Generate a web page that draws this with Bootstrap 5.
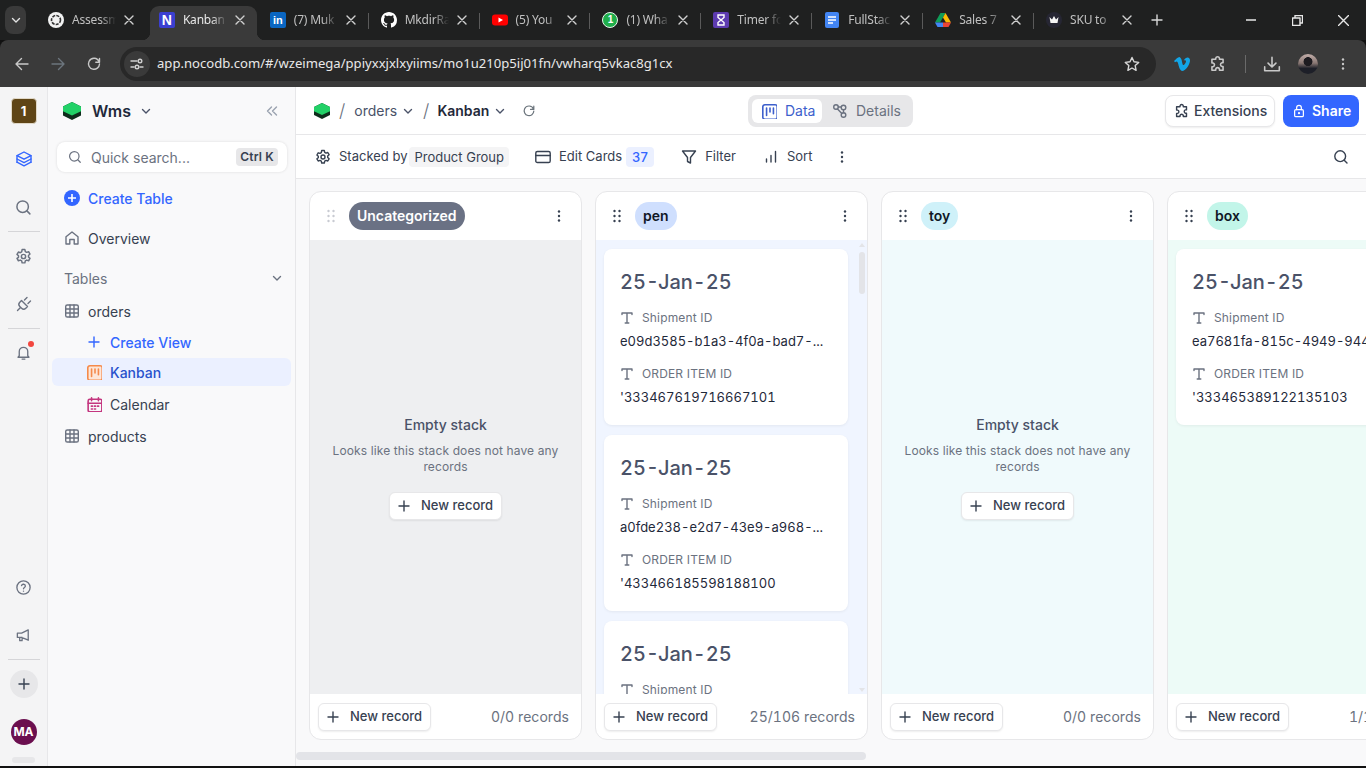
<!DOCTYPE html>
<html lang="en">
<head>
<meta charset="utf-8">
<title>Kanban</title>
<link href="https://cdn.jsdelivr.net/npm/bootstrap@5.3.0/dist/css/bootstrap.min.css" rel="stylesheet">
<style>
html,body{width:1366px;height:768px;overflow:hidden;margin:0;background:#111;font-family:Inter,"Liberation Sans",sans-serif;color:#374151}
svg{display:block;flex:none}
.ic{fill:none;stroke:currentColor;stroke-width:1.4;stroke-linecap:round;stroke-linejoin:round}
.app-root{width:1366px;height:766px}
/* browser chrome */
.tabstrip{height:40px;background:#1f2020;color:#c0c0c0;font-family:"Noto Sans","Open Sans",sans-serif;font-size:12px}
.tab-menu{width:21px;height:28px;margin:6px 10px 0 5px;background:#3a3a3a;border-radius:8px;color:#e3e3e3;flex:none}
.brow-tab{width:110.9px;height:34px;margin-top:6px;padding:0 0 6px 12px;position:relative;flex:none}
.brow-tab.on{background:#3a3a3a;border-radius:9px 9px 0 0;color:#e8e8e8;width:107px;margin:6px .9px 0 3px;padding-left:9px}
.brow-tab.on::before,.brow-tab.on::after{content:"";position:absolute;bottom:0;width:8px;height:8px}
.brow-tab.on::before{left:-8px;background:radial-gradient(circle at 0 0,transparent 8px,#3a3a3a 8.500px)}
.brow-tab.on::after{right:-8px;background:radial-gradient(circle at 100% 0,transparent 8px,#3a3a3a 8.500px)}
.brow-tab.sep::before{content:"";position:absolute;left:-1px;top:7px;height:16px;width:1px;background:#5a5a5a}
.fav{width:16px;height:16px;margin-right:8px;flex:none;font-weight:700;text-align:center;color:#fff}
.fav-n{background:#3b3fd1;border-radius:2px;font-size:14px;line-height:16px;font-family:"Liberation Sans",sans-serif}
.fav-in{background:#0a66c2;border-radius:2px;font-size:11px;line-height:16px;font-family:"Liberation Sans",sans-serif}
.fav-wa{background:#1fae4b;border:1.5px solid #e8f5ec;border-radius:50%;font-size:10px;line-height:13px;font-family:"Liberation Sans",sans-serif}
.tab-name{width:44px;overflow:hidden;white-space:nowrap;-webkit-mask-image:linear-gradient(90deg,#000 65%,transparent 100%);mask-image:linear-gradient(90deg,#000 65%,transparent 100%);letter-spacing:-.2px}
.tab-x{margin-left:auto;margin-right:12px;color:#d0d0d0}
.on .tab-x{margin-right:11px}
.new-tab{margin:6px 0 0 1px;color:#d8d8d8;width:22px;height:28px;flex:none}
.win-btns{margin-left:auto;color:#e8e8e8}
.win-btn{width:46px;height:40px}
.toolbar-row{height:47px;background:#3a3a3a;color:#c9c9c9;border-radius:8px 8px 0 0;padding-left:4px}
.nav-ic{width:36px;flex:none}
.omni{width:1036px;height:34px;margin-left:8px;background:#282828;border-radius:17px;color:#e8e8e8;font-family:"Noto Sans","Open Sans",sans-serif;font-size:13.1px;padding-left:4px;flex:none}
.omni-tune{width:26px;height:26px;border-radius:50%;background:#3a3a3a;margin-right:7px;color:#d0d0d0}
.omni-star{margin-left:auto;margin-right:16px;color:#d8d8d8}
.tb-right{margin-left:17px}
.tb-puz{margin-left:18px}
.tb-sep{width:1px;height:18px;background:#6a6a6a;margin:0 17px 0 18px}
.me-pic{width:20px;height:20px;border-radius:50%;background:radial-gradient(circle at 50% 38%,#1d1b20 0 26%,transparent 30%),linear-gradient(#c2aeaa 0,#8a7874 45%,#1d1f28 72%);margin:0 17px}
/* app */
.main-wrap{height:679px;background:#fff}
.rail{width:48px;flex:none;background:#f4f4f5;border-right:1px solid #e7e7e9;color:#6b7280;position:relative}
.rail-badge{width:26px;height:26px;margin-top:11px;background:#5f4516;border-radius:4px;border:1px solid #e0d8c8;color:#fff;font-weight:700;font-size:13px;line-height:24px;text-align:center}
.rail-btn{width:32px;height:32px;flex:none}
.rail-blue{color:#36f}
.rail-a{margin-top:19px}.rail-b{margin-top:16px}
.rail-line{width:32px;height:1px;background:#d5d5d8;flex:none}
.rail-d{margin-top:8px}
.rail-e{margin-top:8px}
.rail-f{margin-top:7px}
.rail-add{width:28px;height:28px;border-radius:50%;background:#e7e7e9;color:#374151;margin-top:10px;flex:none}
.rail-ava{width:26px;height:26px;border-radius:50%;background:#6b0f4f;color:#fff;font-size:12px;font-weight:700;line-height:26px;text-align:center;margin-top:21px;margin-bottom:21px;flex:none}
.bell-dot{position:absolute;top:5px;right:6px;width:6px;height:6px;border-radius:50%;background:#f2473f}
.bell-wrap{position:relative}
.side{width:248px;flex:none;background:#f9f9fa;border-right:1px solid #e7e7e9;font-size:14px;padding:0 4px}
.side-head{height:48px;padding:0 13px 0 7px}
.brand{font-size:16px;font-weight:600;color:#1f293a;margin:0 9px 0 11px}
.chev-s{color:#4a5268}
.collapse-ic{margin-left:auto;color:#9aa2af}
.qsearch{height:30px;margin:7px 4px 6px 5px;background:#fff;border-radius:8px;box-shadow:0 0 3px rgba(0,0,0,.12);padding:0 9px 0 11px;color:#6b7280}
.qsearch span.q{margin-left:9px}
.kbd-chip{margin-left:auto;background:#e7e7e9;color:#374151;font-size:12px;font-weight:600;border-radius:4px;padding:0 4px;line-height:18px;height:18px;letter-spacing:.2px}
.s-row{padding-left:12px;color:#374151}
.s-h40{height:40px}
.s-ic{width:16px;margin-right:8px;color:#6b7280}
.s-blue{color:#36f;font-weight:500}
.s-tables{color:#6b7280;padding-right:8px}
.s-sub{height:28px;padding-left:34px;border-radius:6px}
.s-on{background:#ebf0ff;color:#2952cc;font-weight:500}
.s-prod{padding-left:12px}
.m5{margin-top:5px}.m2{margin-top:2px}.m4{margin-top:4px}
.s-h24{height:24px;margin-top:1px}
.c-orange{color:#f58a4b;fill:#fde6d8}.c-pink{color:#c4367f}.c-plus{color:#36f}
/* content */
.content{min-width:0;background:#fff}
.topbar{height:48px;padding:0 7px 0 18px;border-bottom:1px solid #e7e7e9;font-size:14px;color:#4a5268}
.slash{font-size:18px;color:#6b7280;font-weight:300;margin:0 9px}
.crumb{margin-right:5px}
.crumb-b{color:#1f293a;font-weight:600;margin-right:5px;margin-left:-1px}
.seg{width:165px;height:32px;background:#e7e7e9;border-radius:8px;padding:4px;margin-left:auto}
.seg-on{width:70px;height:24px;background:#fff;border-radius:6px;color:#3d5fcc;padding-left:9px;flex:none}
.seg-off{padding-left:10px;color:#6b7280}
.btn-ext{width:110px;height:32px;margin-left:252px;background:#fff;border:1px solid #e7e7e9;border-radius:8px;box-shadow:0 1px 2px rgba(0,0,0,.07);color:#374151;padding-left:8px;font-size:14px;font-weight:500;flex:none}
.btn-share{width:76px;height:32px;margin-left:8px;background:#36f;border-radius:8px;color:#fff;font-weight:600;padding-left:9px;flex:none}
.btn-share svg{margin-right:6px}
.subbar{height:44px;padding:0 17px 0 19px;border-bottom:1px solid #e7e7e9;font-size:13px;color:#374151}
.chip-g{background:#f4f4f5;border-radius:4px;padding:0 5px;line-height:20px;height:20px;margin-left:2px;font-size:13px}
.chip-b{background:#ebf0ff;color:#36f;border-radius:4px;width:28px;height:20px;line-height:20px;text-align:center;margin-left:4px;font-weight:500;letter-spacing:.4px}
.i-after{margin-right:8px}
.g-edit{margin-left:26px}.g-filter{margin-left:27px}.g-sort{margin-left:27px}.g-more{margin-left:22px}
.board{height:587px;background:#f9f9fa;padding:12px 0 0 13px;overflow:hidden;position:relative}
.stack{width:273px;flex:none;height:549px;margin-right:13px;background:#fff;border:1px solid #e7e7e9;border-radius:12px;overflow:hidden}
.st-head{height:48px;padding:0 13px;flex:none}
.drag{color:#374151}
.drag.dim{color:#c8cbd2}
.pill{height:28px;border-radius:14px;padding:0 8px;margin-left:10px;font-size:14px;font-weight:600;line-height:28px;color:#111827}
.pill-gray{background:#6a7184;color:#fff}
.pill-pen{background:#cfdffe}.pill-toy{background:#cff1f9}.pill-box{background:#c2f5e9}
.st-more{margin-left:auto;margin-right:1px;color:#374151}
.st-body{height:454px;position:relative;overflow:hidden;flex:none}
.bg-gray{background:#eeeff1}.bg-pen{background:#f0f5ff}.bg-toy{background:#f0fafc}.bg-box{background:#edfbf7}
.empty-title{font-size:14px;font-weight:500;color:#4a5268}
.empty-text{font-size:12px;line-height:16px;color:#6b7280;width:240px;text-align:center;margin-top:8px;letter-spacing:.12px}
.new-rec{width:113px;height:28px;background:#fff;border:1px solid #e7e7e9;border-radius:6px;box-shadow:0 1px 2px rgba(0,0,0,.07);font-size:13px;font-weight:500;color:#374151;padding-left:6px;flex:none}
.new-rec svg{margin-right:9px}
.empty-btn{margin-top:17px}
.st-foot{height:45px;padding:0 12px 0 8px;flex:none}
.rec-count{margin-left:auto;font-size:14px;color:#6b7280;white-space:nowrap;font-variant-numeric:tabular-nums;letter-spacing:.05px}
.cards{padding:9px 0 0 8px}
.kcard{width:244px;height:176px;flex:none;background:#fff;border-radius:8px;box-shadow:0 1px 3px rgba(0,0,0,.06);padding:17px 16px 0;margin-bottom:10px}
.k-title{font-size:20px;line-height:32px;font-weight:500;color:#4a5268;font-variant-numeric:tabular-nums}
.k-label{font-size:12px;line-height:16px;color:#6b7280;margin-top:12px;letter-spacing:.15px}
.k-label svg{margin-right:8px;color:#6b7280}
.k-val{font-size:13px;line-height:20px;color:#1f293a;margin-top:5px;white-space:nowrap;font-variant-numeric:tabular-nums}
.k-gap{margin-top:15px}
.sb-thumb{position:absolute;right:2px;top:12px;width:6px;height:42px;background:#e3e4e8;border-radius:3px}
.sb-up,.sb-dn{position:absolute;right:2px;width:0;height:0;border-left:3px solid transparent;border-right:3px solid transparent}
.sb-up{top:3px;border-bottom:4px solid #e3e4e8}
.sb-dn{bottom:2px;border-top:4px solid #e3e4e8}
.h-scroll{position:absolute;left:0;bottom:6px;width:570px;height:8px;background:#e3e4e8;border-radius:4px}
.rail-scroll{position:absolute;left:12px;bottom:3px;width:23px;height:6px;border-radius:3px;background:#e7e7e9}
</style>
</head>
<body>
<svg width="0" height="0" class="position-absolute">
<defs>
<symbol id="x" viewBox="0 0 12 12"><path d="M2 2l8 8M10 2l-8 8"/></symbol>
<symbol id="chev" viewBox="0 0 12 12"><path d="M2.5 4.5L6 8l3.5-3.5"/></symbol>
<symbol id="plus" viewBox="0 0 16 16"><path d="M8 3v10M3 8h10"/></symbol>
<symbol id="search" viewBox="0 0 16 16"><circle cx="7.2" cy="7.2" r="5.4"/><path d="M11.2 11.2L14 14"/></symbol>
<symbol id="gear" viewBox="0 0 16 16"><circle cx="8" cy="8" r="2"/><path d="M6.7 1.5h2.6l.4 1.9 1.3.7 1.8-.6 1.3 2.2-1.4 1.3v1.5l1.4 1.3-1.3 2.2-1.8-.6-1.3.7-.4 1.9H6.7l-.4-1.9-1.3-.7-1.8.6-1.3-2.2L3.3 8.8V7.3L1.9 6l1.3-2.2 1.8.6 1.3-.7z"/></symbol>
<symbol id="dots" viewBox="0 0 16 16"><circle cx="8" cy="3.5" r="1.2" fill="currentColor" stroke="none"/><circle cx="8" cy="8" r="1.2" fill="currentColor" stroke="none"/><circle cx="8" cy="12.5" r="1.2" fill="currentColor" stroke="none"/></symbol>
<symbol id="drag" viewBox="0 0 16 16"><g fill="currentColor" stroke="none"><circle cx="5.5" cy="3" r="1.2"/><circle cx="5.5" cy="8" r="1.2"/><circle cx="5.5" cy="13" r="1.2"/><circle cx="10.5" cy="3" r="1.2"/><circle cx="10.5" cy="8" r="1.2"/><circle cx="10.5" cy="13" r="1.2"/></g></symbol>
<symbol id="T" viewBox="0 0 14 14"><path d="M2 3.5V2h10v1.5M7 2v10M5.2 12h3.6"/></symbol>
<symbol id="grid" viewBox="0 0 16 16"><rect x="1.7" y="2" width="12.6" height="12" rx="1.6"/><path d="M1.7 6h12.6M1.7 10h12.6M6 2v12M10 2v12"/></symbol>
<symbol id="layers" viewBox="0 0 18 18"><path d="M9 2l7 3.6-7 3.6-7-3.6z"/><path d="M2 9l7 3.6L16 9"/><path d="M2 12.2l7 3.6 7-3.6"/><path d="M2 5.6v6.6M16 5.6v6.6"/></symbol>
<symbol id="plug" viewBox="0 0 18 18"><path d="M6.5 5.5l6 6-1.7 1.7a3 3 0 01-4.2 0l-1.8-1.8a3 3 0 010-4.2zM9.5 5L12 2.5M13 8.500L15.500 6M5 13l-2.500 2.500"/></symbol>
<symbol id="bell" viewBox="0 0 18 18"><path d="M4.500 12.500V8a4.500 4.500 0 019 0v4.500l1.300 1.500H3.200zM7.500 16h3"/></symbol>
<symbol id="help" viewBox="0 0 18 18"><circle cx="9" cy="9" r="7"/><path d="M6.900 7a2.100 2.100 0 014.100.500c0 1.400-2 1.700-2 2.900M9 12.800v.1"/></symbol>
<symbol id="mega" viewBox="0 0 18 18"><path d="M2.500 6.500H7L14 3v11L7 11H2.500zM5 11v3.500h2.500V11"/></symbol>
<symbol id="logo" viewBox="0 0 18 18"><path d="M9 0l9 4.500v9L9 18l-9-4.500v-9z" fill="#0f2d1c"/><path d="M9 0l9 4.500v4.800L9 13.500 0 9.300V4.500z" fill="#22d167"/></symbol>
<symbol id="kan" viewBox="0 0 14 14"><rect x=".7" y=".7" width="12.600" height="12.600" rx="1.800"/><path d="M4 3.500v6.500M7 3.500v3.500M10 3.500v5"/></symbol>
<symbol id="home" viewBox="0 0 16 16"><path d="M2 6.800L8 2l6 4.800V14h-3.800V9.500H5.800V14H2z"/></symbol>
<symbol id="cal" viewBox="0 0 14 14"><rect x="1" y="2" width="12" height="11" rx="1.400"/><path d="M1 5.500h12M4 .8v2.400M10 .8v2.400M3.800 8h1M6.500 8h1M9.200 8h1M3.800 10.500h1M6.500 10.500h1"/></symbol>
<symbol id="details" viewBox="0 0 16 16"><circle cx="4" cy="4" r="2.300"/><circle cx="11.500" cy="4.500" r="2.300"/><circle cx="11.500" cy="12" r="2.300"/><path d="M6.300 4h3M11.500 6.800v2.900M5.500 6l4.300 4.500"/></symbol>
<symbol id="puzzle" viewBox="0 0 16 16"><path d="M6 2.800a1.700 1.700 0 013.300 0v1h3.200v3.100h-1a1.700 1.700 0 000 3.300h1v3.300H9.300v-1a1.700 1.700 0 00-3.300 0v1H2.600V10.400h1a1.700 1.700 0 000-3.300h-1V3.800H6z"/></symbol>
<symbol id="lock" viewBox="0 0 16 16"><rect x="3" y="6.500" width="10" height="8" rx="1.500"/><path d="M5.300 6.500V4.300a2.700 2.700 0 015.400 0v2.200"/><circle cx="8" cy="10.500" r=".6" fill="currentColor"/></symbol>
<symbol id="card" viewBox="0 0 16 16"><rect x=".8" y="2.500" width="14.400" height="11" rx="1.600"/><path d="M.8 6.500h14.400"/></symbol>
<symbol id="funnel" viewBox="0 0 16 16"><path d="M1.500 2h13L9.500 8.500V14L6.500 12.500V8.500z"/></symbol>
<symbol id="sortbar" viewBox="0 0 16 16"><path d="M3.500 13v-3M8 13V6.500M12.500 13V2.500"/></symbol>
<symbol id="reload" viewBox="0 0 16 16"><path d="M13.500 8A5.500 5.500 0 113 5.500M13.500 2.500v3.700H9.800M13.200 6A5.500 5.500 0 003 5.500"/></symbol>
</defs>
</svg>

<div class="app-root d-flex flex-column">
  <!-- tab strip -->
  <div class="tabstrip d-flex">
    <div class="tab-menu d-flex align-items-center justify-content-center"><svg class="ic" width="12" height="12"><use href="#chev"/></svg></div>
    <div class="brow-tab d-flex align-items-center">
      <svg class="fav" viewBox="0 0 16 16"><circle cx="8" cy="8" r="8" fill="#f2f2f2"/><circle cx="8" cy="8" r="4.500" fill="none" stroke="#333" stroke-width="1.600" stroke-dasharray="3 1.200"/></svg>
      <span class="tab-name">Assessm</span><svg class="ic tab-x" width="12" height="12"><use href="#x"/></svg>
    </div>
    <div class="brow-tab on d-flex align-items-center">
      <div class="fav fav-n">N</div><span class="tab-name">Kanban</span><svg class="ic tab-x" width="12" height="12"><use href="#x"/></svg>
    </div>
    <div class="brow-tab d-flex align-items-center">
      <div class="fav fav-in">in</div><span class="tab-name">(7) Muk</span><svg class="ic tab-x" width="12" height="12"><use href="#x"/></svg>
    </div>
    <div class="brow-tab sep d-flex align-items-center">
      <svg class="fav" viewBox="0 0 16 16"><path fill="#fff" d="M8 0C3.580 0 0 3.580 0 8c0 3.540 2.290 6.530 5.470 7.590.4.07.55-.17.55-.38 0-.19-.01-.82-.01-1.490-2.010.37-2.530-.49-2.690-.94-.09-.23-.48-.94-.82-1.130-.28-.15-.68-.52-.01-.53.63-.01 1.080.58 1.230.82.72 1.210 1.870.87 2.330.66.07-.52.28-.87.51-1.070-1.780-.2-3.640-.89-3.640-3.950 0-.87.31-1.590.82-2.150-.08-.2-.36-1.020.08-2.120 0 0 .67-.21 2.200.82.64-.18 1.320-.27 2-.27.68 0 1.360.09 2 .27 1.530-1.040 2.200-.82 2.200-.82.44 1.100.16 1.920.08 2.120.51.56.82 1.270.82 2.150 0 3.070-1.870 3.750-3.650 3.950.29.25.54.73.54 1.480 0 1.070-.01 1.930-.01 2.200 0 .21.15.46.55.38A8.013 8.013 0 0016 8c0-4.420-3.580-8-8-8z"/></svg>
      <span class="tab-name">MkdirRa</span><svg class="ic tab-x" width="12" height="12"><use href="#x"/></svg>
    </div>
    <div class="brow-tab sep d-flex align-items-center">
      <svg class="fav" viewBox="0 0 16 16"><rect y="2.500" width="16" height="11" rx="3" fill="#f00"/><path d="M6.500 5.500L11 8l-4.500 2.500z" fill="#fff"/></svg>
      <span class="tab-name">(5) You</span><svg class="ic tab-x" width="12" height="12"><use href="#x"/></svg>
    </div>
    <div class="brow-tab sep d-flex align-items-center">
      <div class="fav fav-wa">1</div>
      <span class="tab-name">(1) Wha</span><svg class="ic tab-x" width="12" height="12"><use href="#x"/></svg>
    </div>
    <div class="brow-tab sep d-flex align-items-center">
      <svg class="fav" viewBox="0 0 16 16"><rect width="16" height="16" rx="2" fill="#5d3bb0"/><path d="M5 3h6v2.500L8 8l3 2.500V13H5v-2.500L8 8 5 5.500z" fill="none" stroke="#fff" stroke-width="1.400"/></svg>
      <span class="tab-name">Timer fo</span><svg class="ic tab-x" width="12" height="12"><use href="#x"/></svg>
    </div>
    <div class="brow-tab sep d-flex align-items-center">
      <svg class="fav" viewBox="0 0 16 16"><rect x="1" width="14" height="16" rx="2" fill="#4285f4"/><path d="M4 5h8M4 8h8M4 11h5" stroke="#fff" stroke-width="1.500"/></svg>
      <span class="tab-name">FullStac</span><svg class="ic tab-x" width="12" height="12"><use href="#x"/></svg>
    </div>
    <div class="brow-tab sep d-flex align-items-center">
      <svg class="fav" viewBox="0 0 16 16"><path d="M5.500 1h5L8 5.500 5 10.500H0z" fill="#0f9d58"/><path d="M10.500 1L16 10.500h-5L8 5.500z" fill="#fbbc04"/><path d="M0 10.500h8V15H2.500z" fill="#4285f4"/><path d="M8 10.500h8L13.500 15H8z" fill="#ea4335"/></svg>
      <span class="tab-name">Sales 7</span><svg class="ic tab-x" width="12" height="12"><use href="#x"/></svg>
    </div>
    <div class="brow-tab sep d-flex align-items-center">
      <svg class="fav" viewBox="0 0 16 16"><circle cx="8" cy="8" r="8" fill="#262633"/><path d="M3.500 5L6 7.500 8 4l2 3.500L12.500 5l-1 6h-7z" fill="#f5f5f5"/></svg>
      <span class="tab-name">SKU to</span><svg class="ic tab-x" width="12" height="12"><use href="#x"/></svg>
    </div>
    <div class="new-tab d-flex align-items-center justify-content-center"><svg class="ic" width="16" height="16"><use href="#plus"/></svg></div>
    <div class="win-btns d-flex">
      <div class="win-btn d-flex align-items-center justify-content-center"><svg width="10" height="10" class="ic"><path d="M0 5h10"/></svg></div>
      <div class="win-btn d-flex align-items-center justify-content-center"><svg width="11" height="11" class="ic"><path d="M.5 3h7.500v7.500H.5zM3 3V.5h7.500V8H8"/></svg></div>
      <div class="win-btn d-flex align-items-center justify-content-center"><svg width="11" height="11" class="ic"><path d="M.5.500l10 10M10.500.500l-10 10"/></svg></div>
    </div>
  </div>
  <!-- address bar -->
  <div class="toolbar-row d-flex align-items-center">
    <div class="nav-ic d-flex justify-content-center"><svg class="ic" width="16" height="16" viewBox="0 0 16 16"><path d="M14 8H2M7.500 2.500L2 8l5.500 5.500"/></svg></div>
    <div class="nav-ic d-flex justify-content-center text-secondary"><svg class="ic" width="16" height="16" viewBox="0 0 16 16"><path d="M2 8h12M8.500 2.500L14 8l-5.500 5.500"/></svg></div>
    <div class="nav-ic d-flex justify-content-center"><svg class="ic" width="16" height="16"><use href="#reload"/></svg></div>
    <div class="omni d-flex align-items-center">
      <div class="omni-tune d-flex align-items-center justify-content-center"><svg class="ic" width="14" height="14" viewBox="0 0 14 14"><path d="M1 4h6M1 10h3"/><circle cx="10" cy="4" r="1.800"/><circle cx="7" cy="10" r="1.800"/><path d="M10 10h3"/></svg></div>
      <span>app.nocodb.com/#/wzeimega/ppiyxxjxlxyiims/mo1u210p5ij01fn/vwharq5vkac8g1cx</span>
      <svg class="ic omni-star" width="16" height="16" viewBox="0 0 16 16"><path d="M8 1.500l2 4.300 4.700.6-3.500 3.200.9 4.700L8 12l-4.100 2.300.9-4.700L1.300 6.400 6 5.800z"/></svg>
    </div>
    <div class="tb-right d-flex align-items-center">
      <svg width="18" height="18" viewBox="0 0 18 18"><path d="M1 6l1 1.300c2-1.400 2.600-.8 3.300 2 .8 3 1.800 6.700 4 6.700 3 0 7-5.500 7.700-10 .5-4-4-5-6.300-.4 1.500-.9 3-.4 2 1.800-1 2-2.300 3.500-3 2-.8-2-.8-6.500-3-7.200C5.500 1.600 3 4.300 1 6z" fill="#12a5e6"/></svg>
      <svg class="ic tb-puz" width="18" height="18" viewBox="0 0 16 16"><use href="#puzzle"/></svg>
      <div class="tb-sep"></div>
      <svg class="ic" width="18" height="18" viewBox="0 0 16 16"><path d="M8 2v8.500M4.500 7.200L8 10.700l3.500-3.500M1.500 10.500V14h13v-3.500"/></svg>
      <div class="me-pic"></div>
      <svg class="ic" width="16" height="16"><use href="#dots"/></svg>
    </div>
  </div>
  <!-- app -->
  <div class="main-wrap d-flex">
    <div class="rail d-flex flex-column align-items-center">
      <div class="rail-badge">1</div>
      <div class="rail-btn rail-a rail-blue d-flex align-items-center justify-content-center"><svg class="ic" width="18" height="18"><use href="#layers"/></svg></div>
      <div class="rail-btn rail-b d-flex align-items-center justify-content-center"><svg class="ic" width="17" height="17" viewBox="0 0 16 16"><use href="#search"/></svg></div>
      <div class="rail-line rail-d"></div>
      <div class="rail-btn rail-e d-flex align-items-center justify-content-center"><svg class="ic" width="17" height="17" viewBox="0 0 16 16"><use href="#gear"/></svg></div>
      <div class="rail-btn rail-b d-flex align-items-center justify-content-center"><svg class="ic" width="18" height="18"><use href="#plug"/></svg></div>
      <div class="rail-line rail-d"></div>
      <div class="rail-btn bell-wrap rail-f d-flex align-items-center justify-content-center"><svg class="ic" width="17" height="17" viewBox="0 0 18 18"><use href="#bell"/></svg><span class="bell-dot"></span></div>
      <div class="rail-btn mt-auto d-flex align-items-center justify-content-center"><svg class="ic" width="17" height="17" viewBox="0 0 18 18"><use href="#help"/></svg></div>
      <div class="rail-btn rail-b d-flex align-items-center justify-content-center"><svg class="ic" width="17" height="17" viewBox="0 0 18 18"><use href="#mega"/></svg></div>
      <div class="rail-line rail-d"></div>
      <div class="rail-add d-flex align-items-center justify-content-center"><svg class="ic" width="16" height="16"><use href="#plus"/></svg></div>
      <div class="rail-ava">MA</div>
      <div class="rail-scroll"></div>
    </div>
    <div class="side">
      <div class="side-head d-flex align-items-center">
        <svg width="18" height="18" class="ms-1"><use href="#logo"/></svg>
        <span class="brand">Wms</span>
        <svg class="ic chev-s" width="12" height="12"><use href="#chev"/></svg>
        <svg class="ic collapse-ic" width="12" height="12" viewBox="0 0 12 12"><path d="M5.500 2L1.500 6l4 4M10.500 2l-4 4 4 4"/></svg>
      </div>
      <div class="qsearch d-flex align-items-center">
        <svg class="ic" width="14" height="14" viewBox="0 0 16 16"><use href="#search"/></svg>
        <span class="q">Quick search...</span>
        <span class="kbd-chip">Ctrl K</span>
      </div>
      <div class="s-row s-h40 d-flex align-items-center s-blue">
        <svg class="s-ic" width="16" height="16" viewBox="0 0 16 16"><circle cx="8" cy="8" r="8" fill="#36f"/><path d="M8 4v8M4 8h8" stroke="#fff" stroke-width="1.600"/></svg>
        <span>Create Table</span>
      </div>
      <div class="s-row s-h40 d-flex align-items-center">
        <svg class="ic s-ic" width="16" height="16"><use href="#home"/></svg><span>Overview</span>
      </div>
      <div class="s-row s-h40 d-flex align-items-center s-tables">
        <span>Tables</span><svg class="ic ms-auto" width="12" height="12"><use href="#chev"/></svg>
      </div>
      <div class="s-row s-h24 d-flex align-items-center">
        <svg class="ic s-ic" width="16" height="16"><use href="#grid"/></svg><span>orders</span>
      </div>
      <div class="s-row s-sub m5 d-flex align-items-center s-blue">
        <svg class="ic s-ic c-plus" width="16" height="16"><use href="#plus"/></svg><span>Create View</span>
      </div>
      <div class="s-row s-sub m2 s-on d-flex align-items-center">
        <svg class="ic s-ic c-orange" width="16" height="16" viewBox="-1 -1 16 16"><use href="#kan"/></svg><span>Kanban</span>
      </div>
      <div class="s-row s-sub m4 d-flex align-items-center">
        <svg class="ic s-ic c-pink" width="16" height="16" viewBox="-1 -1 16 16"><use href="#cal"/></svg><span>Calendar</span>
      </div>
      <div class="s-row s-sub s-prod m4 d-flex align-items-center">
        <svg class="ic s-ic" width="16" height="16"><use href="#grid"/></svg><span>products</span>
      </div>
    </div>
    <div class="content flex-grow-1 d-flex flex-column">
      <div class="topbar d-flex align-items-center">
        <svg width="16" height="16" viewBox="0 0 18 18"><use href="#logo"/></svg>
        <span class="slash">/</span>
        <span class="crumb">orders</span><svg class="ic" width="12" height="12"><use href="#chev"/></svg>
        <span class="slash">/</span>
        <span class="crumb-b">Kanban</span><svg class="ic" width="12" height="12"><use href="#chev"/></svg>
        <svg class="ic ms-3 text-secondary" width="14" height="14" viewBox="0 0 16 16"><use href="#reload"/></svg>
        <div class="seg d-flex align-items-center">
          <div class="seg-on d-flex align-items-center"><svg class="ic me-2" width="16" height="16" viewBox="-1 -1 16 16"><use href="#kan"/></svg><span>Data</span></div>
          <div class="seg-off d-flex align-items-center"><svg class="ic me-2" width="16" height="16"><use href="#details"/></svg><span>Details</span></div>
        </div>
        <div class="btn-ext d-flex align-items-center"><svg class="ic me-1" width="16" height="16"><use href="#puzzle"/></svg><span>Extensions</span></div>
        <div class="btn-share d-flex align-items-center"><svg class="ic" width="14" height="14" viewBox="0 0 16 16"><use href="#lock"/></svg><span>Share</span></div>
      </div>
      <div class="subbar d-flex align-items-center">
        <svg class="ic i-after" width="16" height="16"><use href="#gear"/></svg><span>Stacked by</span><span class="chip-g">Product Group</span>
        <svg class="ic i-after g-edit" width="16" height="16"><use href="#card"/></svg><span>Edit Cards</span><span class="chip-b">37</span>
        <svg class="ic i-after g-filter" width="16" height="16"><use href="#funnel"/></svg><span>Filter</span>
        <svg class="ic i-after g-sort" width="16" height="16"><use href="#sortbar"/></svg><span>Sort</span>
        <svg class="ic g-more" width="16" height="16"><use href="#dots"/></svg>
        <svg class="ic ms-auto" width="16" height="16"><use href="#search"/></svg>
      </div>
      <div class="board d-flex">
        <!-- Uncategorized -->
        <div class="stack d-flex flex-column">
          <div class="st-head d-flex align-items-center"><svg class="drag dim" width="16" height="16"><use href="#drag"/></svg><span class="pill pill-gray">Uncategorized</span><svg class="st-more ic" width="16" height="16"><use href="#dots"/></svg></div>
          <div class="st-body bg-gray d-flex flex-column align-items-center justify-content-center">
            <div class="empty-title">Empty stack</div>
            <div class="empty-text">Looks like this stack does not have any records</div>
            <div class="new-rec empty-btn d-flex align-items-center"><svg class="ic" width="16" height="16"><use href="#plus"/></svg>New record</div>
          </div>
          <div class="st-foot d-flex align-items-center"><div class="new-rec d-flex align-items-center"><svg class="ic" width="16" height="16"><use href="#plus"/></svg>New record</div><span class="rec-count">0/0 records</span></div>
        </div>
        <!-- pen -->
        <div class="stack d-flex flex-column">
          <div class="st-head d-flex align-items-center"><svg class="drag" width="16" height="16"><use href="#drag"/></svg><span class="pill pill-pen">pen</span><svg class="st-more ic" width="16" height="16"><use href="#dots"/></svg></div>
          <div class="st-body bg-pen cards">
            <div class="kcard"><div class="k-title">25-Jan-25</div><div class="k-label d-flex align-items-center"><svg class="ic" width="14" height="14"><use href="#T"/></svg>Shipment ID</div><div class="k-val">e09d3585-b1a3-4f0a-bad7-...</div><div class="k-label k-gap d-flex align-items-center"><svg class="ic" width="14" height="14"><use href="#T"/></svg>ORDER ITEM ID</div><div class="k-val">'333467619716667101</div></div>
            <div class="kcard"><div class="k-title">25-Jan-25</div><div class="k-label d-flex align-items-center"><svg class="ic" width="14" height="14"><use href="#T"/></svg>Shipment ID</div><div class="k-val">a0fde238-e2d7-43e9-a968-...</div><div class="k-label k-gap d-flex align-items-center"><svg class="ic" width="14" height="14"><use href="#T"/></svg>ORDER ITEM ID</div><div class="k-val">'433466185598188100</div></div>
            <div class="kcard"><div class="k-title">25-Jan-25</div><div class="k-label d-flex align-items-center"><svg class="ic" width="14" height="14"><use href="#T"/></svg>Shipment ID</div></div>
            <span class="sb-up"></span><span class="sb-thumb"></span><span class="sb-dn"></span>
          </div>
          <div class="st-foot d-flex align-items-center"><div class="new-rec d-flex align-items-center"><svg class="ic" width="16" height="16"><use href="#plus"/></svg>New record</div><span class="rec-count">25/106 records</span></div>
        </div>
        <!-- toy -->
        <div class="stack d-flex flex-column">
          <div class="st-head d-flex align-items-center"><svg class="drag" width="16" height="16"><use href="#drag"/></svg><span class="pill pill-toy">toy</span><svg class="st-more ic" width="16" height="16"><use href="#dots"/></svg></div>
          <div class="st-body bg-toy d-flex flex-column align-items-center justify-content-center">
            <div class="empty-title">Empty stack</div>
            <div class="empty-text">Looks like this stack does not have any records</div>
            <div class="new-rec empty-btn d-flex align-items-center"><svg class="ic" width="16" height="16"><use href="#plus"/></svg>New record</div>
          </div>
          <div class="st-foot d-flex align-items-center"><div class="new-rec d-flex align-items-center"><svg class="ic" width="16" height="16"><use href="#plus"/></svg>New record</div><span class="rec-count">0/0 records</span></div>
        </div>
        <!-- box -->
        <div class="stack d-flex flex-column">
          <div class="st-head d-flex align-items-center"><svg class="drag" width="16" height="16"><use href="#drag"/></svg><span class="pill pill-box">box</span><svg class="st-more ic" width="16" height="16"><use href="#dots"/></svg></div>
          <div class="st-body bg-box cards">
            <div class="kcard"><div class="k-title">25-Jan-25</div><div class="k-label d-flex align-items-center"><svg class="ic" width="14" height="14"><use href="#T"/></svg>Shipment ID</div><div class="k-val">ea7681fa-815c-4949-944e-...</div><div class="k-label k-gap d-flex align-items-center"><svg class="ic" width="14" height="14"><use href="#T"/></svg>ORDER ITEM ID</div><div class="k-val">'333465389122135103</div></div>
          </div>
          <div class="st-foot d-flex align-items-center"><div class="new-rec d-flex align-items-center"><svg class="ic" width="16" height="16"><use href="#plus"/></svg>New record</div><span class="rec-count">1/1 records</span></div>
        </div>
        <div class="h-scroll"></div>
      </div>
    </div>
  </div>
</div>
<script src="https://cdn.jsdelivr.net/npm/bootstrap@5.3.0/dist/js/bootstrap.bundle.min.js"></script>
</body>
</html>
